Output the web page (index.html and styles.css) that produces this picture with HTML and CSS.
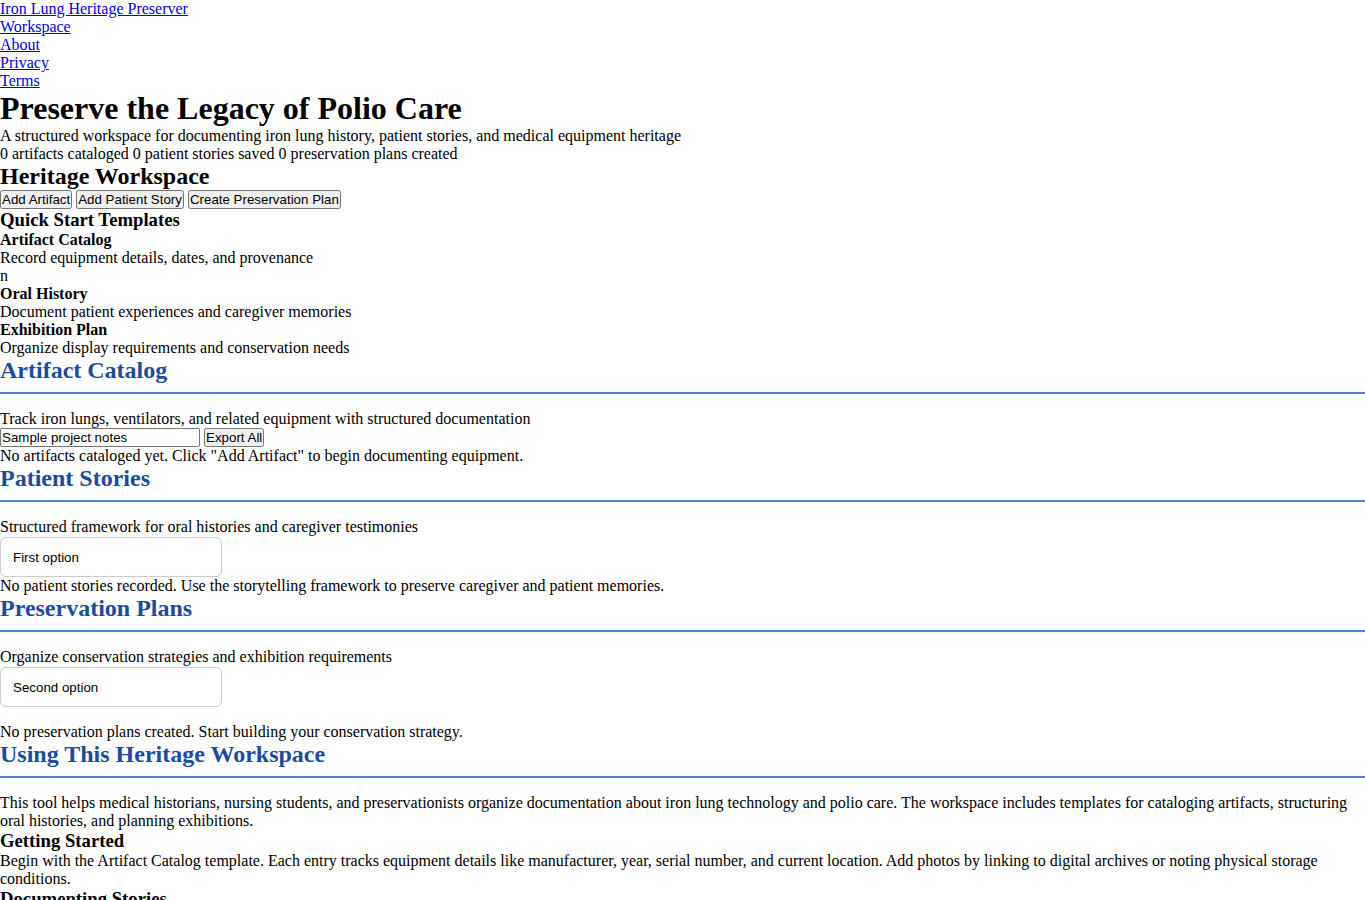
FILE: index.html
```html
<!DOCTYPE html>
<html lang="en">
<head>
    <meta charset="UTF-8">
    <meta name="viewport" content="width=device-width, initial-scale=1.0">
    <title>Iron Lung Heritage Preserver</title>
    <link rel="stylesheet" href="styles.css">
</head>
<body>
    <nav class="site-nav">
        <div><a href="#">Iron Lung Heritage Preserver</a></div>
        <div><a href="#workspace">Workspace</a></div>
        <div><a href="#about">About</a></div>
        <div><a href="#">Privacy</a></div>
        <div><a href="#">Terms</a></div>
    </nav>

    <header class="hero">
        <h1>Preserve the Legacy of Polio Care</h1>
        <p>A structured workspace for documenting iron lung history, patient stories, and medical equipment heritage</p>
        <div class="stats">
            <span><span id="artifactCount">0</span> artifacts cataloged</span>
            <span><span id="storyCount">0</span> patient stories saved</span>
            <span><span id="planCount">0</span> preservation plans created</span>
        </div>
    </header>

    <main id="workspace">
        <h2>Heritage Workspace</h2>
        <div class="actions">
            <button>Add Artifact</button>
            <button>Add Patient Story</button>
            <button>Create Preservation Plan</button>
        </div>

        <h3>Quick Start Templates</h3>
        <div class="template">
            <h4>Artifact Catalog</h4>
            <p>Record equipment details, dates, and provenance</p>
        </div>
        <div>n</div>
        <div class="template">
            <h4>Oral History</h4>
            <p>Document patient experiences and caregiver memories</p>
        </div>
        <div class="template">
            <h4>Exhibition Plan</h4>
            <p>Organize display requirements and conservation needs</p>
        </div>

        <section class="panel">
            <h2 class="panel-title">Artifact Catalog</h2>
            <p>Track iron lungs, ventilators, and related equipment with structured documentation</p>
            <div class="toolbar">
                <input type="text" class="notes" value="Sample project notes">
                <button>Export All</button>
            </div>
            <p class="empty">No artifacts cataloged yet. Click "Add Artifact" to begin documenting equipment.</p>
        </section>

        <section class="panel">
            <h2 class="panel-title">Patient Stories</h2>
            <p>Structured framework for oral histories and caregiver testimonies</p>
            <select class="picker">
                <option>First option</option>
                <option>Second option</option>
            </select>
            <p class="empty">No patient stories recorded. Use the storytelling framework to preserve caregiver and patient memories.</p>
        </section>

        <section class="panel">
            <h2 class="panel-title">Preservation Plans</h2>
            <p>Organize conservation strategies and exhibition requirements</p>
            <div class="picker-wrap">
                <select class="picker">
                    <option>First option</option>
                    <option selected>Second option</option>
                </select>
            </div>
            <p class="empty">No preservation plans created. Start building your conservation strategy.</p>
        </section>
    </main>

    <section class="panel" id="about">
        <h2 class="panel-title">Using This Heritage Workspace</h2>
        <p>This tool helps medical historians, nursing students, and preservationists organize documentation about iron lung technology and polio care. The workspace includes templates for cataloging artifacts, structuring oral histories, and planning exhibitions.</p>
        <h3>Getting Started</h3>
        <p>Begin with the Artifact Catalog template. Each entry tracks equipment details like manufacturer, year, serial number, and current location. Add photos by linking to digital archives or noting physical storage conditions.</p>
        <h3>Documenting Stories</h3>
        <p>Use the Oral History template to record interviews with former patients, nurses, and family members. Note the date, setting, and consent details for each recording.</p>
    </section>
</body>
</html>
```

FILE: styles.css
```css
* {
    margin: 0;
    padding: 0;
}
body {
    font-family: 'Liberation Serif', serif;
    font-size: 16px;
    color: #000000;
    background: #ffffff;
}
h1 {
    font-size: 2em;
}
h2 {
    font-size: 1.5em;
}
h3 {
    font-size: 1.17em;
}
.panel-title {
    color: #1a4c9f; /* deep blue section titles */
    padding-bottom: 8px;
    border-bottom: 2px solid #4a86d0;
    margin-bottom: 16px;
}
button,
input {
    font-family: 'Liberation Sans', sans-serif;
    font-size: 13.33px;
}
.notes {
    width: 200px;
    box-sizing: border-box;
}
.picker {
    display: block;
    appearance: none;
    -webkit-appearance: none;
    width: 222px;
    height: 40px;
    margin-top: 1px;
    padding: 0 12px;
    border: 1px solid #cccccc;
    border-radius: 6px;
    background: #ffffff;
    color: #000000;
    font-family: 'Liberation Sans', sans-serif;
    font-size: 13.33px;
}
.picker-wrap {
    margin-bottom: 16px;
}
```
